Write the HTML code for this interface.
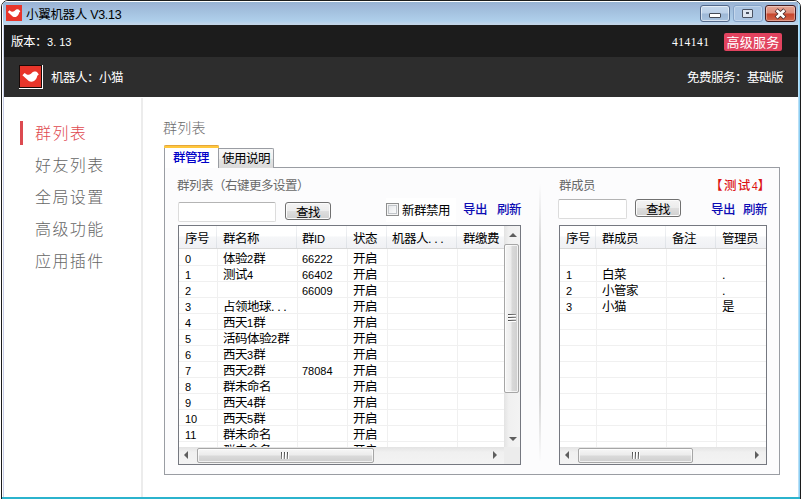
<!DOCTYPE html>
<html lang="zh-CN">
<head>
<meta charset="utf-8">
<title>小翼机器人 V3.13</title>
<style>
html,body{margin:0;padding:0;}
body{width:802px;height:499px;overflow:hidden;background:#fff;position:relative;
 font-family:"Liberation Sans","Noto Sans CJK SC",sans-serif;font-size:12px;color:#000;}
.abs{position:absolute;}
.t{position:absolute;white-space:nowrap;line-height:16px;height:16px;padding-top:1px;font-size:12.5px;letter-spacing:-0.5px;}
#frame{position:absolute;left:1px;top:0;width:798px;height:520px;border:1px solid #1c1c1c;border-radius:7px 7px 0 0;background:#fff;overflow:hidden;}
#o{position:absolute;left:-2px;top:-1px;width:802px;height:499px;}
#titlebar{position:absolute;left:2px;top:1px;width:798px;height:24px;
 background:linear-gradient(to bottom,#ffffff 0,#ffffff 1px,#96b3d3 1px,#a0b8d9 5px,#a3c0de 10px,#afcfeb 20px,#c2d5e9 23px);}
#lb1{position:absolute;left:2px;top:2px;width:1px;height:520px;background:#fff;}
#lb2{position:absolute;left:3px;top:25px;width:1px;height:520px;background:#c9cfe9;}
#rb{position:absolute;left:798px;top:3px;width:2px;height:520px;background:linear-gradient(to right,#b9e0f7 0,#b9e0f7 1px,#8ecff3 1px);}
#bb{position:absolute;left:2px;top:497px;width:798px;height:4px;background:#2bb3cd;}
.cap{position:absolute;top:5px;height:15px;border:1px solid #52688a;border-radius:3px;box-sizing:content-box;}
#bar1{position:absolute;left:4px;top:25px;width:794px;height:32px;background:#1c1c1c;}
#bar2{position:absolute;left:4px;top:57px;width:794px;height:40px;background:#2d2d2d;}
.w{color:#fff;}
#vip{position:absolute;left:724px;top:33px;width:58px;height:18px;background:#e2435f;border-radius:2px;color:#fff;font-size:13px;line-height:19px;text-align:center;letter-spacing:0.3px;}
.nav{position:absolute;left:35px;font-size:16px;letter-spacing:1.4px;font-weight:300;color:#666;line-height:24px;height:24px;white-space:nowrap;}
#sidebar-line{position:absolute;left:141px;top:98px;width:2px;height:400px;background:#ececec;}
.blue{color:#0c0cb4;font-weight:500;}
.gray{color:#696969;}
#pane{position:absolute;left:164px;top:167px;width:614px;height:306px;border:1px solid #9a9da3;background:#fcfcfd;}
#tab1{position:absolute;left:164px;top:145px;width:53px;height:23px;border:1px solid #9a9da3;border-bottom:none;border-top:none;background:#fff;border-radius:2px 2px 0 0;}
#tab1:before{content:"";position:absolute;left:-1px;top:0;width:55px;height:3px;background:linear-gradient(to bottom,#e5a63a 0,#e5a63a 1px,#ffc73c 1px);border-radius:2px 2px 0 0;}
#tab2{position:absolute;left:219px;top:148px;width:54px;height:19px;border:1px solid #9a9da3;border-bottom:none;border-left:none;border-radius:0 2px 0 0;
 background:linear-gradient(to bottom,#f8f8f8 0,#f0f0f0 50%,#e6e6e6 50%,#dadada 100%);}
.btn{position:absolute;box-sizing:border-box;border:1px solid #707070;border-radius:3px;
 background:linear-gradient(to bottom,#f4f4f4 0,#ececec 48%,#dedede 52%,#d0d0d0 100%);box-shadow:inset 0 0 0 1px #fbfbfb;
 text-align:center;font-size:12.5px;letter-spacing:-0.5px;line-height:20px;}
.inp{position:absolute;box-sizing:border-box;border:1px solid #dcdcdc;border-top-color:#b4b4b4;border-radius:2px;background:#fff;}
.lv{position:absolute;box-sizing:border-box;border:1px solid #757880;background:#fff;overflow:hidden;}
.hdr{position:absolute;left:0;top:0;height:22px;border-bottom:1px solid #d8d8d8;background:linear-gradient(to bottom,#ffffff 0,#ffffff 45%,#f5f6f8 50%,#f0f1f4 100%);}
.hsep{position:absolute;top:0;width:1px;height:22px;background:linear-gradient(to bottom,#f2f3f5,#dde1e6);}
.vline{position:absolute;width:1px;background:#f0f0f0;}
.hline{position:absolute;height:1px;background:#f0f0f0;left:0;}
.c{position:absolute;white-space:nowrap;line-height:16px;height:16px;padding-top:1px;font-size:12.5px;letter-spacing:-0.5px;}
.sbv{position:absolute;background:linear-gradient(to right,#e3e3e3 0,#f0f0f0 30%,#f3f3f3 100%);}
.sbh{position:absolute;background:linear-gradient(to bottom,#e3e3e3 0,#f0f0f0 30%,#f3f3f3 100%);}
.thv{position:absolute;box-sizing:border-box;border:1px solid #a6a6a6;border-radius:2px;
 background:linear-gradient(to right,#f6f6f6 0,#ececec 45%,#d9d9d9 55%,#cfcfcf 100%);box-shadow:inset 0 0 0 1px rgba(255,255,255,.7);}
.thh{position:absolute;box-sizing:border-box;border:1px solid #a6a6a6;border-radius:2px;
 background:linear-gradient(to bottom,#f6f6f6 0,#ececec 45%,#d9d9d9 55%,#cfcfcf 100%);box-shadow:inset 0 0 0 1px rgba(255,255,255,.7);}
.n{font-size:11px;letter-spacing:0;}
.d{letter-spacing:2.7px;}
.arr{position:absolute;width:0;height:0;border:4px solid transparent;opacity:.85;}
.au{border-width:0 4px 4.5px 4px;border-bottom-color:#444;}
.ad{border-width:4.5px 4px 0 4px;border-top-color:#444;}
.al{border-width:4px 4.5px 4px 0;border-right-color:#444;}
.ar{border-width:4px 0 4px 4.5px;border-left-color:#444;}
</style>
</head>
<body>
<div id="frame"><div id="o">
 <div id="titlebar"></div>
 <div id="lb1"></div><div id="lb2"></div><div id="rb"></div>
 <svg class="abs" style="left:6px;top:5px" width="16" height="16" viewBox="0 0 21 21"><rect width="21" height="21" fill="#e8352a"/><path d="M2.4 9.2 L4.6 7 L6.8 8.6 Q8.2 9 9.5 8.6 C11 8.4 12 6.3 13.5 5.8 C15 5.1 16.8 5.6 17.6 6.8 L18.8 8.5 L17.3 9.8 C17 12 15.8 14 14 15 C12.5 15.9 10.5 16 8.8 15 Z" fill="#fff"/></svg>
 <div class="t" style="left:26px;top:6px;letter-spacing:-0.3px;">小翼机器人 V3.13</div>
 <div class="cap" style="left:700px;width:28px;background:linear-gradient(to bottom,#c6d8ec 0,#bcd0e8 48%,#9db7d6 52%,#a9c2de 100%);box-shadow:inset 0 0 0 1px rgba(255,255,255,.55);">
   <div class="abs" style="left:8px;top:7px;width:10px;height:3px;background:#fff;border:1px solid #444a55;border-radius:1px;"></div>
 </div>
 <div class="cap" style="left:733px;width:28px;border-color:#86a4c8;background:#abc5e3;box-shadow:inset 0 0 0 1px rgba(255,255,255,.3);">
   <div class="abs" style="left:8px;top:3px;width:9px;height:7px;background:#dfe6f0;border:1px solid #4a5262;border-radius:1px;"><div class="abs" style="left:3px;top:2px;width:3px;height:2px;border:1px solid #4a5262;box-sizing:border-box;background:#8a93a3"></div></div>
 </div>
 <div class="cap" style="left:765px;width:29px;border-color:#431c20;background:linear-gradient(to bottom,#e4a493 0,#dd8b78 48%,#c6452c 52%,#d2684e 100%);box-shadow:inset 0 0 0 1px rgba(255,255,255,.35);">
   <svg class="abs" style="left:8px;top:2px" width="14" height="12" viewBox="0 0 14 12"><g stroke-linecap="butt" fill="none"><path d="M2.2 1.8 L10.8 10 M10.8 1.8 L2.2 10" stroke="#4c2b2b" stroke-width="4.4"/><path d="M2.6 2.2 L10.4 9.6 M10.4 2.2 L2.6 9.6" stroke="#fff" stroke-width="2.7"/></g></svg>
 </div>

 <div id="bar1"></div>
 <div id="bar2"></div>
 <div class="t w" style="left:11px;top:33px;">版本：<span class="n">3<span style="letter-spacing:3px">.</span>13</span></div>
 <div class="t w" style="left:672px;top:33px;font-family:'Liberation Serif',serif;font-size:11.5px;letter-spacing:0.5px">414141</div>
 <div id="vip">高级服务</div>

 <div class="abs" style="left:19px;top:65px;width:24px;height:24px;background:#fff;"></div>
 <div class="abs" style="left:19px;top:65px;width:23px;height:23px;background:#1a0a08;"></div>
 <svg class="abs" style="left:20px;top:66px" width="21" height="21" viewBox="0 0 21 21"><rect width="21" height="21" fill="#e8352a"/><path d="M2.4 9.2 L4.6 7 L6.8 8.6 Q8.2 9 9.5 8.6 C11 8.4 12 6.3 13.5 5.8 C15 5.1 16.8 5.6 17.6 6.8 L18.8 8.5 L17.3 9.8 C17 12 15.8 14 14 15 C12.5 15.9 10.5 16 8.8 15 Z" fill="#fff"/></svg>
 <div class="t w" style="left:51px;top:69px;">机器人：小猫</div>
 <div class="t w" style="left:687px;top:69px;">免费服务：基础版</div>

 <div class="abs" style="left:20px;top:121px;width:3px;height:24px;background:#dc4a50;"></div>
 <div class="nav" style="top:122px;color:#e0494f;">群列表</div>
 <div class="nav" style="top:154px;">好友列表</div>
 <div class="nav" style="top:186px;">全局设置</div>
 <div class="nav" style="top:218px;">高级功能</div>
 <div class="nav" style="top:250px;">应用插件</div>
 <div id="sidebar-line"></div>

 <div class="t gray" style="left:163px;top:119px;font-size:14px;letter-spacing:0.3px;font-weight:300;color:#6c6c6c;">群列表</div>

 <div id="pane"></div>
 <div id="tab2"></div>
 <div id="tab1"></div>
 <div class="t" style="left:173px;top:149px;color:#0000c8;font-weight:500;">群管理</div>
 <div class="t" style="left:222px;top:150px;">使用说明</div>

 <div class="t gray" style="left:177px;top:177px;">群列表（右键更多设置）</div>
 <div class="inp" style="left:178px;top:202px;width:98px;height:20px;"></div>
 <div class="btn" style="left:285px;top:202px;width:46px;height:18px;">查找</div>
 <div class="abs" style="left:386px;top:198px;width:70px;height:24px;background:#fff;"></div>
 <div class="abs" style="left:539px;top:184px;width:2px;height:278px;background:linear-gradient(to bottom,rgba(205,205,205,0) 0,rgba(205,205,205,.9) 25%,rgba(205,205,205,.9) 75%,rgba(205,205,205,0) 100%);"></div>
 <div class="abs" style="left:386px;top:203px;width:13px;height:13px;box-sizing:border-box;border:1px solid #8e8f8f;background:linear-gradient(135deg,#dfe2e5 0,#f4f5f6 60%,#fff 100%);box-shadow:inset 0 0 0 1px #f4f4f4, inset 0 0 0 2px #c2c6ca;"></div>
 <div class="t" style="left:402px;top:202px;">新群禁用</div>
 <div class="t blue" style="left:463px;top:201px;">导出</div>
 <div class="t blue" style="left:497px;top:201px;">刷新</div>

 <div class="lv" style="left:178px;top:225px;width:343px;height:240px;">
  <div class="hdr" style="width:325px;"></div>
  <div class="hsep" style="left:37px"></div><div class="vline" style="left:38px;top:23px;height:198px"></div><div class="hsep" style="left:117px"></div><div class="vline" style="left:118px;top:23px;height:198px"></div><div class="hsep" style="left:167px"></div><div class="vline" style="left:168px;top:23px;height:198px"></div><div class="hsep" style="left:207px"></div><div class="vline" style="left:208px;top:23px;height:198px"></div><div class="hsep" style="left:277px"></div><div class="vline" style="left:278px;top:23px;height:198px"></div>
  <div class="hline" style="top:39px;width:325px"></div><div class="hline" style="top:55px;width:325px"></div><div class="hline" style="top:71px;width:325px"></div><div class="hline" style="top:87px;width:325px"></div><div class="hline" style="top:103px;width:325px"></div><div class="hline" style="top:119px;width:325px"></div><div class="hline" style="top:135px;width:325px"></div><div class="hline" style="top:151px;width:325px"></div><div class="hline" style="top:167px;width:325px"></div><div class="hline" style="top:183px;width:325px"></div><div class="hline" style="top:199px;width:325px"></div><div class="hline" style="top:215px;width:325px"></div>
  <div class="c" style="left:6px;top:4px">序号</div><div class="c" style="left:44px;top:4px">群名称</div><div class="c" style="left:123px;top:4px">群<span class="n">ID</span></div><div class="c" style="left:174px;top:4px">状态</div><div class="c" style="left:213px;top:4px">机器人<span class="d">...</span></div><div class="c" style="left:284px;top:4px">群缴费</div>
  <div class="c" style="left:6px;top:24px"><span class="n">0</span></div>
  <div class="c" style="left:44px;top:24px">体验<span class="n">2</span>群</div>
  <div class="c" style="left:123px;top:24px"><span class="n">66222</span></div>
  <div class="c" style="left:174px;top:24px">开启</div>
  <div class="c" style="left:6px;top:40px"><span class="n">1</span></div>
  <div class="c" style="left:44px;top:40px">测试<span class="n">4</span></div>
  <div class="c" style="left:123px;top:40px"><span class="n">66402</span></div>
  <div class="c" style="left:174px;top:40px">开启</div>
  <div class="c" style="left:6px;top:56px"><span class="n">2</span></div>
  <div class="c" style="left:123px;top:56px"><span class="n">66009</span></div>
  <div class="c" style="left:174px;top:56px">开启</div>
  <div class="c" style="left:6px;top:72px"><span class="n">3</span></div>
  <div class="c" style="left:44px;top:72px">占领地球<span class="d">...</span></div>
  <div class="c" style="left:174px;top:72px">开启</div>
  <div class="c" style="left:6px;top:88px"><span class="n">4</span></div>
  <div class="c" style="left:44px;top:88px">西天<span class="n">1</span>群</div>
  <div class="c" style="left:174px;top:88px">开启</div>
  <div class="c" style="left:6px;top:104px"><span class="n">5</span></div>
  <div class="c" style="left:44px;top:104px">活码体验<span class="n">2</span>群</div>
  <div class="c" style="left:174px;top:104px">开启</div>
  <div class="c" style="left:6px;top:120px"><span class="n">6</span></div>
  <div class="c" style="left:44px;top:120px">西天<span class="n">3</span>群</div>
  <div class="c" style="left:174px;top:120px">开启</div>
  <div class="c" style="left:6px;top:136px"><span class="n">7</span></div>
  <div class="c" style="left:44px;top:136px">西天<span class="n">2</span>群</div>
  <div class="c" style="left:123px;top:136px"><span class="n">78084</span></div>
  <div class="c" style="left:174px;top:136px">开启</div>
  <div class="c" style="left:6px;top:152px"><span class="n">8</span></div>
  <div class="c" style="left:44px;top:152px">群未命名</div>
  <div class="c" style="left:174px;top:152px">开启</div>
  <div class="c" style="left:6px;top:168px"><span class="n">9</span></div>
  <div class="c" style="left:44px;top:168px">西天<span class="n">4</span>群</div>
  <div class="c" style="left:174px;top:168px">开启</div>
  <div class="c" style="left:6px;top:184px"><span class="n">10</span></div>
  <div class="c" style="left:44px;top:184px">西天<span class="n">5</span>群</div>
  <div class="c" style="left:174px;top:184px">开启</div>
  <div class="c" style="left:6px;top:200px"><span class="n">11</span></div>
  <div class="c" style="left:44px;top:200px">群未命名</div>
  <div class="c" style="left:174px;top:200px">开启</div>
  <div class="c" style="left:6px;top:216px"><span class="n">12</span></div>
  <div class="c" style="left:44px;top:216px">群未命名</div>
  <div class="c" style="left:174px;top:216px">开启</div>
  <div class="sbv" style="left:325px;top:0;width:16px;height:221px;"></div>
  <div class="arr au" style="left:330px;top:7px;"></div>
  <div class="thv" style="left:325px;top:18px;width:15px;height:149px;"></div>
  <div class="abs" style="left:329px;top:88px;width:8px;height:1px;background:linear-gradient(to right,#4a4a4a,#909090);box-shadow:0 1px 0 #fff;"></div><div class="abs" style="left:329px;top:91px;width:8px;height:1px;background:linear-gradient(to right,#4a4a4a,#909090);box-shadow:0 1px 0 #fff;"></div><div class="abs" style="left:329px;top:94px;width:8px;height:1px;background:linear-gradient(to right,#4a4a4a,#909090);box-shadow:0 1px 0 #fff;"></div>
  <div class="arr ad" style="left:329.5px;top:211px;"></div>
  <div class="sbh" style="left:0;top:221px;width:325px;height:17px;"></div>
  <div class="abs" style="left:325px;top:221px;width:16px;height:17px;background:#ececec;"></div>
  <div class="arr al" style="left:5px;top:225px;"></div>
  <div class="thh" style="left:18px;top:222px;width:177px;height:15px;"></div>
  <div class="abs" style="left:102px;top:226px;width:1px;height:7px;background:linear-gradient(to bottom,#4a4a4a,#909090);box-shadow:1px 0 0 #fff;"></div><div class="abs" style="left:105px;top:226px;width:1px;height:7px;background:linear-gradient(to bottom,#4a4a4a,#909090);box-shadow:1px 0 0 #fff;"></div><div class="abs" style="left:108px;top:226px;width:1px;height:7px;background:linear-gradient(to bottom,#4a4a4a,#909090);box-shadow:1px 0 0 #fff;"></div>
  <div class="arr ar" style="left:314px;top:225px;"></div>
 </div>

 <div class="t gray" style="left:559px;top:177px;">群成员</div>
 <div class="t" style="left:710px;top:177px;color:#dc1414;font-weight:500;letter-spacing:1.4px;">【测试<span class="n">4</span>】</div>
 <div class="inp" style="left:558px;top:199px;width:69px;height:20px;"></div>
 <div class="btn" style="left:635px;top:199px;width:46px;height:18px;">查找</div>
 <div class="t blue" style="left:711px;top:201px;">导出</div>
 <div class="t blue" style="left:743px;top:201px;">刷新</div>

 <div class="lv" style="left:559px;top:225px;width:208px;height:240px;">
  <div class="hdr" style="width:206px;"></div>
  <div class="hsep" style="left:35px"></div><div class="vline" style="left:36px;top:23px;height:198px"></div><div class="hsep" style="left:105px"></div><div class="vline" style="left:106px;top:23px;height:198px"></div><div class="hsep" style="left:155px"></div><div class="vline" style="left:156px;top:23px;height:198px"></div>
  <div class="hline" style="top:39px;width:206px"></div><div class="hline" style="top:55px;width:206px"></div><div class="hline" style="top:71px;width:206px"></div><div class="hline" style="top:87px;width:206px"></div><div class="hline" style="top:103px;width:206px"></div><div class="hline" style="top:119px;width:206px"></div><div class="hline" style="top:135px;width:206px"></div><div class="hline" style="top:151px;width:206px"></div><div class="hline" style="top:167px;width:206px"></div><div class="hline" style="top:183px;width:206px"></div><div class="hline" style="top:199px;width:206px"></div><div class="hline" style="top:215px;width:206px"></div>
  <div class="c" style="left:6px;top:4px">序号</div><div class="c" style="left:42px;top:4px">群成员</div><div class="c" style="left:112px;top:4px">备注</div><div class="c" style="left:162px;top:4px">管理员</div>
  <div class="c" style="left:6px;top:40px"><span class="n">1</span></div><div class="c" style="left:42px;top:40px">白菜</div><div class="c" style="left:162px;top:40px">.</div>
  <div class="c" style="left:6px;top:56px"><span class="n">2</span></div><div class="c" style="left:42px;top:56px">小管家</div><div class="c" style="left:162px;top:56px">.</div>
  <div class="c" style="left:6px;top:72px"><span class="n">3</span></div><div class="c" style="left:42px;top:72px">小猫</div><div class="c" style="left:162px;top:72px">是</div>
  <div class="sbh" style="left:0;top:221px;width:206px;height:17px;"></div>
  <div class="arr al" style="left:5px;top:225px;"></div>
  <div class="thh" style="left:18px;top:222px;width:115px;height:15px;"></div>
  <div class="abs" style="left:72px;top:226px;width:1px;height:7px;background:linear-gradient(to bottom,#4a4a4a,#909090);box-shadow:1px 0 0 #fff;"></div><div class="abs" style="left:75px;top:226px;width:1px;height:7px;background:linear-gradient(to bottom,#4a4a4a,#909090);box-shadow:1px 0 0 #fff;"></div><div class="abs" style="left:78px;top:226px;width:1px;height:7px;background:linear-gradient(to bottom,#4a4a4a,#909090);box-shadow:1px 0 0 #fff;"></div>
  <div class="arr ar" style="left:195px;top:225px;"></div>
 </div>

 <div id="bb"></div>
</div></div>
</body>
</html>
